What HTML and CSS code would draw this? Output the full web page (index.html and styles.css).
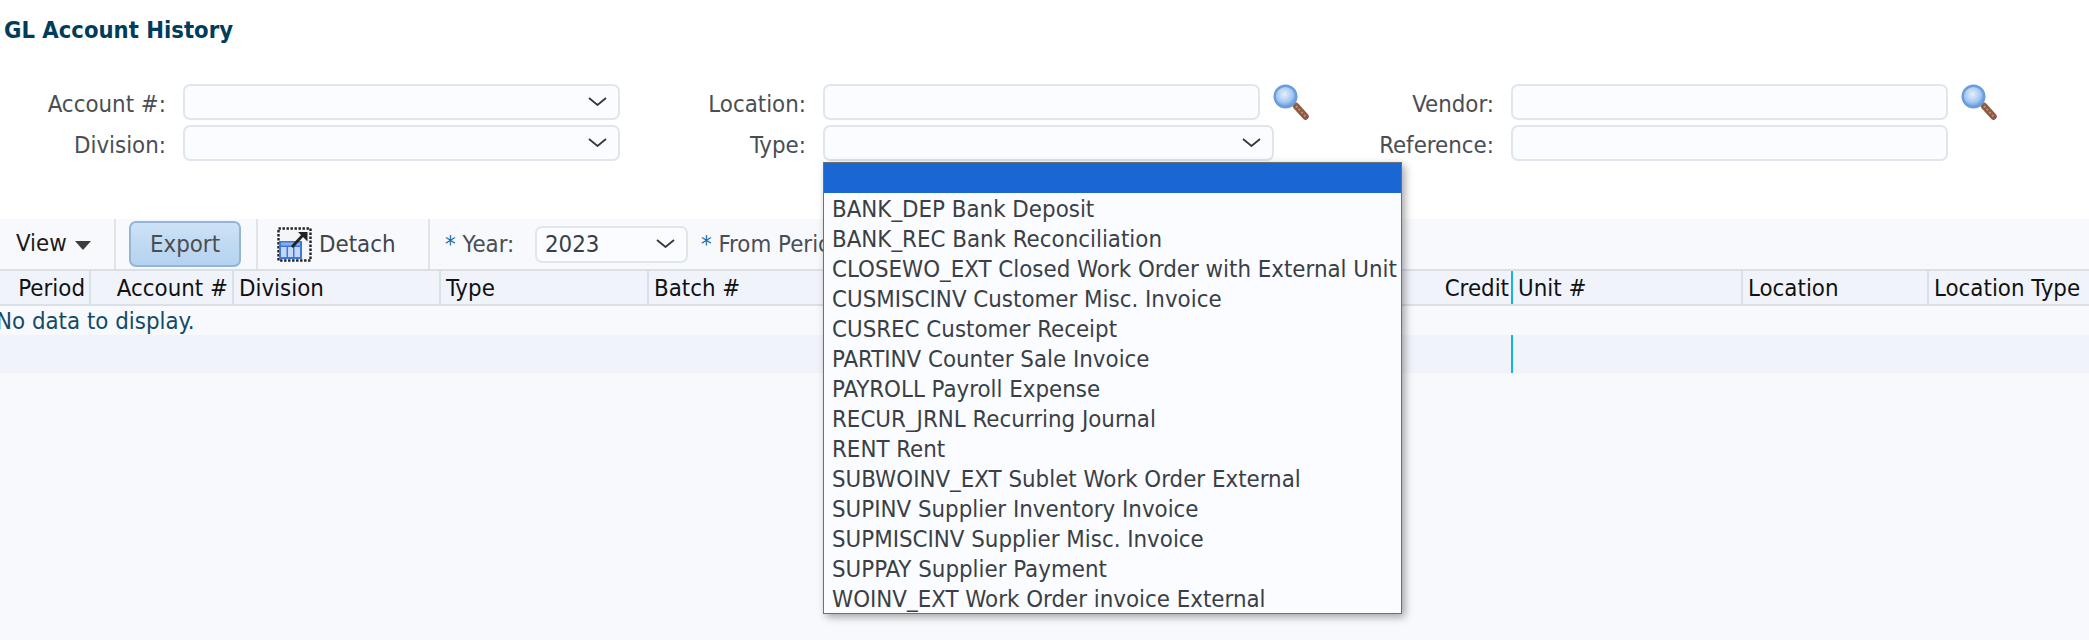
FILE: index.html
```html
<!DOCTYPE html>
<html lang="en">
<head>
<meta charset="utf-8">
<title>GL Account History</title>
<link rel="stylesheet" href="styles.css">
</head>
<body>
<svg class="defs" width="0" height="0" aria-hidden="true">
  <defs>
    <radialGradient id="lens" cx="45%" cy="40%" r="60%">
      <stop offset="0" stop-color="#e4f0fd"/>
      <stop offset="0.6" stop-color="#a6caf2"/>
      <stop offset="1" stop-color="#5f97e0"/>
    </radialGradient>
    <symbol id="chev" viewBox="0 0 19 9"><path d="M1 1l8.500 7L18 1" fill="none" stroke="#33383d" stroke-width="1.800"/></symbol>
    <symbol id="mag" viewBox="0 0 36 36">
      <path d="M23 22l9.500 10.500" stroke="#8d5a44" stroke-width="6.500" stroke-linecap="round" fill="none"/>
      <path d="M23 22l9.500 10.500" stroke="#c08d72" stroke-width="2" stroke-dasharray="2 2" fill="none"/>
      <circle cx="12.500" cy="12.500" r="10.800" fill="url(#lens)" stroke="#6a9ddf" stroke-width="2.400"/>
    </symbol>
  </defs>
</svg>
<h1 class="title">GL Account History</h1>
<form class="filters">
  <label class="lbl">Account #:</label>
  <div class="field sel"><svg class="chev"><use href="#chev"/></svg></div>
  <label class="lbl">Location:</label>
  <div class="field-row"><input class="field txt" type="text"><svg class="mag"><use href="#mag"/></svg></div>
  <label class="lbl">Vendor:</label>
  <div class="field-row"><input class="field txt" type="text"><svg class="mag"><use href="#mag"/></svg></div>
  <label class="lbl">Division:</label>
  <div class="field sel"><svg class="chev"><use href="#chev"/></svg></div>
  <label class="lbl">Type:</label>
  <div class="type-wrap">
    <div class="field sel"><svg class="chev"><use href="#chev"/></svg></div>
    <ul class="dropdown">
      <li class="active">&nbsp;</li>
      <li>BANK_DEP Bank Deposit</li>
      <li>BANK_REC Bank Reconciliation</li>
      <li>CLOSEWO_EXT Closed Work Order with External Unit</li>
      <li>CUSMISCINV Customer Misc. Invoice</li>
      <li>CUSREC Customer Receipt</li>
      <li>PARTINV Counter Sale Invoice</li>
      <li>PAYROLL Payroll Expense</li>
      <li>RECUR_JRNL Recurring Journal</li>
      <li>RENT Rent</li>
      <li>SUBWOINV_EXT Sublet Work Order External</li>
      <li>SUPINV Supplier Inventory Invoice</li>
      <li>SUPMISCINV Supplier Misc. Invoice</li>
      <li>SUPPAY Supplier Payment</li>
      <li>WOINV_EXT Work Order invoice External</li>
    </ul>
  </div>
  <label class="lbl">Reference:</label>
  <div class="field-row"><input class="field txt" type="text"></div>
</form>
<main class="panel">
  <div class="toolbar">
    <div class="tb-group tb-view">View<span class="caret"></span></div>
    <div class="tb-group tb-export"><button class="btn" type="button">Export</button></div>
    <div class="tb-group tb-detach">
      <svg class="detach" viewBox="0 0 35 35">
        <rect x="1.500" y="1.500" width="32" height="32" fill="#f4f5f8" stroke="#222" stroke-width="2.400" stroke-dasharray="2.400 1.600"/>
        <path d="M2 14h23v18H2z" fill="#3f78d8"/>
        <path d="M4 15.500h19v3H4z" fill="#86aeee"/>
        <path d="M4 20h5.500v10H4zM11 20h5v10h-5zM17.500 20H23v10h-5.500z" fill="#c3d8f6"/>
        <path d="M15 20L26 8" stroke="#222" stroke-width="2.800" fill="none"/>
        <path d="M21 5h9.500v9.500z" fill="#222"/>
      </svg>
      <span>Detach</span>
    </div>
    <div class="tb-group tb-params">
      <span class="param param-year"><b class="star">*</b> Year:</span>
      <div class="field year"><span>2023</span><svg class="chev"><use href="#chev"/></svg></div>
      <span class="param"><b class="star">*</b> From Period:</span>
    </div>
  </div>
  <div class="grid head">
    <div class="cell right">Period</div>
    <div class="cell right">Account #</div>
    <div class="cell">Division</div>
    <div class="cell">Type</div>
    <div class="cell">Batch #</div>
    <div class="cell right credit">Credit</div>
    <div class="cell">Unit #</div>
    <div class="cell">Location</div>
    <div class="cell">Location Type</div>
  </div>
  <div class="empty">No data to display.</div>
  <div class="grid stripe">
    <div></div><div></div><div></div><div></div><div></div><div class="credit"></div><div></div><div></div><div></div>
  </div>
</main>
</body>
</html>
```
FILE: styles.css
```css
* { box-sizing: border-box; }
html, body { margin: 0; height: 100%; }
body {
  background: #fff;
  color: #4a4e53;
  font-family: "DejaVu Sans Condensed", "DejaVu Sans", sans-serif;
  font-size: 23.800px;
  overflow: hidden;
}
.defs { position: absolute; }
.title {
  margin: 0;
  height: 84px;
  padding: 16px 0 0 4px;
  color: #003d5c;
  font-size: 23.600px;
  line-height: 28px;
  font-weight: bold;
}
.filters {
  display: grid;
  grid-template-columns: 166px 454px 186px 453px 235px 595px;
  grid-template-rows: 36px 36px;
  row-gap: 5px;
  height: 135px;
  align-items: start;
  width: 2089px;
}
.lbl { text-align: right; line-height: 40px; height: 36px; }
.filters > .field, .field-row, .type-wrap { margin-left: 17px; }
.field {
  display: block;
  height: 36px;
  border: 2px solid #e1e6ec;
  border-radius: 7px;
  background: #fafcff;
}
.sel { position: relative; width: 437px; }
.chev { position: absolute; right: 11px; top: 11px; width: 19px; height: 9px; }
.txt { width: 437px; flex: none; padding: 0; outline: none; }
.field-row { display: flex; gap: 13px; align-items: flex-start; }
.mag { width: 36px; height: 36px; flex: none; }
.type-wrap { position: relative; height: 36px; }
.type-wrap .sel { width: 451px; }
.dropdown {
  position: absolute;
  left: 0;
  top: 37px;
  z-index: 5;
  margin: 0;
  padding: 0;
  width: 579px;
  list-style: none;
  background: #fafcff;
  border: 1px solid #6d7175;
  box-shadow: 3px 3px 8px rgba(0,0,0,.35);
}
.dropdown li { height: 30px; line-height: 32px; padding-left: 8px; color: #3b3f45; white-space: nowrap; overflow: hidden; }
.dropdown .active { background: #1a67d3; }
.panel { height: 421px; background: #f8f9fd; }
.toolbar { display: flex; height: 50px; }
.tb-group { display: flex; align-items: center; border-right: 2px solid #dfe4ea; height: 50px; }
.tb-view { width: 116px; padding: 0 0 2px 16px; color: #1a1a1a; }
.caret {
  margin: 5px 0 0 8px;
  border-top: 9px solid #3d3d3d;
  border-left: 8px solid transparent;
  border-right: 8px solid transparent;
}
.tb-export { width: 142px; padding-left: 13px; }
.btn {
  width: 112px;
  height: 46px;
  padding: 0;
  font: inherit;
  color: #4a4e53;
  border: 2px solid #93b6d8;
  border-radius: 7px;
  background: linear-gradient(#cde2f6, #b4d2f0);
}
.tb-detach { width: 172px; padding-left: 19px; gap: 7px; color: #3f444a; }
.detach { width: 35px; height: 35px; flex: none; }
.tb-params { border: 0; padding-left: 15px; white-space: nowrap; }
.param-year { width: 90px; }
.star { font-weight: normal; color: #1c6ea4; }
.year {
  position: relative;
  width: 153px;
  height: 37px;
  margin-right: 13px;
  padding-left: 8px;
  line-height: 33px;
  color: #3b3f45;
}
.grid {
  display: grid;
  grid-template-columns: 91px 143px 207px 208px 351px 513px 230px 186px 160px;
}
.head {
  height: 37px;
  background: #f0f3fa;
  border-top: 2px solid #d9e0e8;
  border-bottom: 2px solid #d9e0e8;
  color: #111;
}
.cell {
  padding: 0 4px 0 5px;
  line-height: 34px;
  border-right: 2px solid #d9e0e8;
  white-space: nowrap;
  overflow: hidden;
}
.cell:last-child { border-right: 0; }
.right { text-align: right; }
.cell.credit { border-right: 2px solid #13b5dc; padding-right: 2px; }
.empty { height: 29px; line-height: 31px; margin-left: -4px; color: #134a68; }
.stripe { height: 38px; background: #f0f3fa; }
.stripe .credit { border-right: 2px solid #13b5dc; }
```
